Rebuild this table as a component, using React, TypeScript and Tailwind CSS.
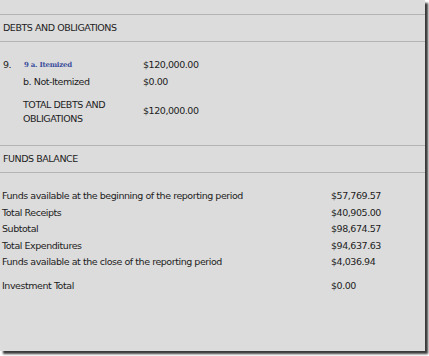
export default function App() {
  const rows: { label: string; value: string }[] = [
    { label: "Funds available at the beginning of the reporting period", value: "$57,769.57" },
    { label: "Total Receipts", value: "$40,905.00" },
    { label: "Subtotal", value: "$98,674.57" },
    { label: "Total Expenditures", value: "$94,637.63" },
    { label: "Funds available at the close of the reporting period", value: "$4,036.94" },
  ];

  return (
    <div className="w-[429px] h-[356px] bg-white" style={{ fontFamily: '"DejaVu Sans", Verdana, sans-serif' }}>
      <div className="w-[425px] h-[351px] bg-[#dcdcdc] shadow-[3px_3px_2px_#3a3a3a] text-[9.5px] tracking-[-0.45px] text-[#1c1c1c] overflow-hidden">
        <div className="h-[14px]" />

        {/* Debts header */}
        <div className="border-t border-[#b4b4b4] shadow-[inset_0_1px_0_#efefef]" />
        <div className="h-[26px] flex items-center pl-[3px]">DEBTS AND OBLIGATIONS</div>
        <div className="border-t border-[#b4b4b4] shadow-[inset_0_1px_0_#efefef]" />

        <div className="pt-[15px]">
          <div className="flex items-center h-[16px]">
            <span className="w-[24px] pl-[3px]">9.</span>
            <span
              className="w-[119px] text-[7px] font-bold tracking-[-0.25px] text-[#3b4f9c]"
              style={{ fontFamily: '"DejaVu Serif", serif' }}
            >
              9 a. Itemized
            </span>
            <span>$120,000.00</span>
          </div>
          <div className="flex items-center h-[18px]">
            <span className="w-[143px] pl-[23px]">b. Not-Itemized</span>
            <span>$0.00</span>
          </div>
          <div className="flex items-center h-[33px] mt-[4px]">
            <span className="w-[143px] pl-[23px] leading-[14px]">
              TOTAL DEBTS AND
              <br />
              OBLIGATIONS
            </span>
            <span>$120,000.00</span>
          </div>
        </div>

        {/* Funds header */}
        <div className="mt-[17px] border-t border-[#b4b4b4] shadow-[inset_0_1px_0_#efefef]" />
        <div className="h-[26px] flex items-center pl-[3px]">FUNDS BALANCE</div>
        <div className="border-t border-[#b4b4b4] shadow-[inset_0_1px_0_#efefef]" />

        <div className="pt-[15px]">
          {rows.map((r) => (
            <div key={r.label} className="flex items-center h-[16.5px]">
              <span className="w-[331px] pl-[2px]">{r.label}</span>
              <span>{r.value}</span>
            </div>
          ))}
          <div className="flex items-center h-[16px] mt-[8px]">
            <span className="w-[331px] pl-[2px]">Investment Total</span>
            <span>$0.00</span>
          </div>
        </div>
      </div>
    </div>
  );
}
